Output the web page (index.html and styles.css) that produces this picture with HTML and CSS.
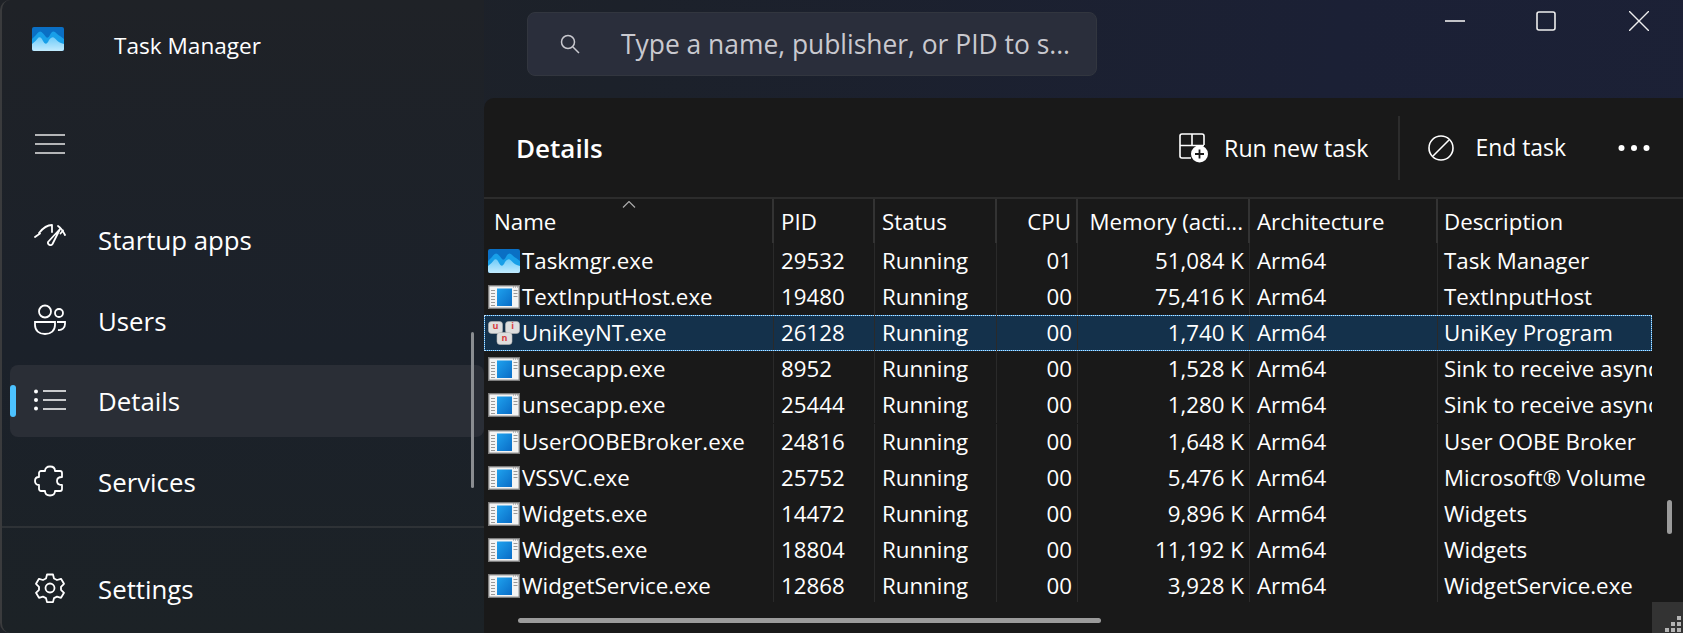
FILE: index.html
```html
<!DOCTYPE html>
<html lang="en">
<head>
<meta charset="utf-8">
<title>Task Manager</title>
<link rel="stylesheet" href="styles.css">
</head>
<body>
<svg class="defs" width="0" height="0" aria-hidden="true">
  <defs>
    <linearGradient id="blue" x1="0" y1="0" x2="1" y2="1"><stop offset="0" stop-color="#1fa2ee"/><stop offset="1" stop-color="#0a6cc6"/></linearGradient>
    <linearGradient id="light" x1="0" y1="0" x2="0" y2="1"><stop offset="0" stop-color="#6fcbf8"/><stop offset="1" stop-color="#c2ebfe"/></linearGradient>
  </defs>
  <symbol id="exe" viewBox="0 0 32 24">
    <rect x="0.7" y="0.7" width="30.600" height="22.600" fill="#f4f4f4" stroke="#7d7d7d" stroke-width="1.400"/>
    <rect x="9" y="3.500" width="15" height="17.500" fill="url(#blue)"/>
    <path d="M3 5.500h4M3 8.500h4M3 11.500h4M3 14.500h4M3 17.500h4M3 20.500h4M25.500 5.500h4M25.500 8.500h4M25.500 11.500h4" stroke="#999" stroke-width="1.200"/>
    <path d="M25 2h5" stroke="#8a8a8a" stroke-width="1.200" stroke-dasharray="1 1"/>
  </symbol>
  <symbol id="tm" viewBox="0 0 32 24">
    <rect width="32" height="24" rx="2" fill="#0a6fc4"/>
    <path d="M0 12 4 8Q7 3 9.500 5 12 7 14 10 16 12 18 8 20 3 23 5 26 8 28 9L32 12V22H0z" fill="#189fe8"/>
    <path d="M0 17Q4 14 6.500 10.500 9 9 11 14 14 20 17 13 20 8.500 23 11.500 27 16 32 17V22a2 2 0 0 1-2 2H2a2 2 0 0 1-2-2z" fill="url(#light)"/>
  </symbol>
</svg>
<div class="app">
  <aside class="side">
    <div class="brand">
      <svg class="brand-icon" viewBox="0 0 32 24"><use href="#tm"/></svg>
      <span class="brand-name">Task Manager</span>
    </div>
    <div class="burger"><svg viewBox="0 0 30 20" width="30" height="20"><path d="M0 1h30M0 10h30M0 19h30" stroke="#e6e6e6" stroke-width="1.600"/></svg></div>
    <nav class="nav">
      <a class="item"><svg class="ico" viewBox="0 0 32 32" fill="none" stroke="#fff" stroke-width="1.800" stroke-linecap="round" stroke-linejoin="round"><path d="M1 14 6 10.500M5 10C9 5 13 2 18 2V9M24 3c3 2 5 5 7 9M26.500 10.500 29 7.500"/><path d="M26 6 18.500 21a2.500 2.500 0 0 1-4.500-2Z"/></svg><span>Startup apps</span></a>
      <a class="item"><svg class="ico" viewBox="0 0 32 32" fill="none" stroke="#fff" stroke-width="1.800"><circle cx="11" cy="7.500" r="6"/><circle cx="25" cy="9" r="4"/><path d="M1 18h20v3c0 5.500-4 9-10 9S1 26.500 1 21zM23 18h8v2c0 4-3 6.500-7 6"/></svg><span>Users</span></a>
      <a class="item active"><i class="pip"></i><svg class="ico" viewBox="0 0 32 20" fill="none" stroke="#fff" stroke-width="1.700"><path d="M9 1h23M9 10h23M9 19h23"/><g fill="#fff" stroke="none"><circle cx="2" cy="1.500" r="2"/><circle cx="2" cy="10" r="2"/><circle cx="2" cy="18.500" r="2"/></g></svg><span>Details</span></a>
      <a class="item"><svg class="ico" viewBox="0 0 32 32" fill="none" stroke="#fff" stroke-width="1.800" stroke-linejoin="round"><path d="M11 6c0-3 2-4.500 5-4.500S21 3 21 6h5a2 2 0 0 1 2 2v4c-4 0-5 2-5 4s1 4 5 4v4a2 2 0 0 1-2 2h-5c0 3-2 4.500-5 4.500S11 29 11 26H7a2 2 0 0 1-2-2v-4c-3 0-4-2-4-4s1-4 4-4V8a2 2 0 0 1 2-2z"/></svg><span>Services</span></a>
    </nav>
    <div class="sep"></div>
    <a class="item settings"><svg class="ico" viewBox="0 0 32 32" fill="none" stroke="#fff" stroke-width="1.800" stroke-linejoin="round"><circle cx="16" cy="16" r="4.500"/><path d="M13 2.500h6l1 4 3 1.500 4-1.200 3 5-3 3v3l3 3-3 5-4-1.200-3 1.500-1 4h-6l-1-4-3-1.500-4 1.200-3-5 3-3v-3l-3-3 3-5 4 1.200 3-1.500z"/></svg><span>Settings</span></a>
    <i class="side-thumb"></i>
  </aside>
  <main class="right">
    <header class="top">
      <div class="search">
        <svg viewBox="0 0 22 22" width="22" height="22" fill="none" stroke="#c9c9cf" stroke-width="1.500"><circle cx="9" cy="9" r="6.500"/><path d="m14 14 6 6"/></svg>
        <span>Type a name, publisher, or PID to s...</span>
      </div>
      <div class="win">
        <svg viewBox="0 0 20 20" width="20" height="20"><path d="M0 10h20" stroke="#eee" stroke-width="1.600"/></svg>
        <svg viewBox="0 0 20 20" width="20" height="20"><rect x="1" y="1" width="18" height="18" rx="2" fill="none" stroke="#eee" stroke-width="1.600"/></svg>
        <svg class="close" viewBox="0 0 20 20" width="20" height="20"><path d="m0 0 20 20M20 0 0 20" stroke="#eee" stroke-width="1.400"/></svg>
      </div>
    </header>
    <section class="panel">
      <div class="bar">
        <h1>Details</h1>
        <a class="act"><svg viewBox="0 0 30 30" width="30" height="30" fill="none" stroke="#fff" stroke-width="1.600"><path d="M12 25H3a2 2 0 0 1-2-2V3a2 2 0 0 1 2-2h20a2 2 0 0 1 2 2v9M1 12.500h24M13 1v11.500"/><circle cx="20.500" cy="21" r="8.500" fill="#fff" stroke="none"/><path d="M20.500 16.500v9M16 21h9" stroke="#191919" stroke-width="1.800"/></svg><span>Run new task</span></a>
        <i class="bar-sep"></i>
        <a class="act end"><svg viewBox="0 0 26 26" width="26" height="26" fill="none" stroke="#fff" stroke-width="1.600"><circle cx="13" cy="13" r="12"/><path d="M5 21 21 5"/></svg><span>End task</span></a>
        <svg class="more" viewBox="0 0 32 8" width="32" height="8" fill="#fff"><circle cx="3.500" cy="4" r="3"/><circle cx="16" cy="4" r="3"/><circle cx="28.500" cy="4" r="3"/></svg>
      </div>
      <div class="table">
        <div class="row head">
          <span class="c name">Name<svg class="sort" viewBox="0 0 14 7" width="14" height="7" fill="none" stroke="#aaa" stroke-width="1.200"><path d="m1 6.500 6-6 6 6"/></svg></span>
          <span class="c">PID</span><span class="c">Status</span><span class="c r">CPU</span><span class="c r">Memory (acti...</span><span class="c">Architecture</span><span class="c">Description</span>
        </div>
        <div class="row"><span class="c name"><svg class="pi" viewBox="0 0 32 24"><use href="#tm"/></svg>Taskmgr.exe</span><span class="c">29532</span><span class="c">Running</span><span class="c r">01</span><span class="c r">51,084 K</span><span class="c">Arm64</span><span class="c">Task Manager</span></div>
        <div class="row"><span class="c name"><svg class="pi" viewBox="0 0 32 24"><use href="#exe"/></svg>TextInputHost.exe</span><span class="c">19480</span><span class="c">Running</span><span class="c r">00</span><span class="c r">75,416 K</span><span class="c">Arm64</span><span class="c">TextInputHost</span></div>
        <div class="row sel"><span class="c name"><svg class="pi" viewBox="0 0 32 24"><g fill="#dedede" stroke="#b5b5b5" stroke-width=".6"><rect x="0.500" y="0.500" width="14" height="12" rx="3"/><rect x="17.500" y="0.500" width="14" height="12" rx="3"/><rect x="9" y="11.500" width="15" height="12" rx="3"/></g><g class="keycap"><text x="7.500" y="8">u</text><text x="24.500" y="8">i</text><text x="16.500" y="19.500">n</text></g></svg>UniKeyNT.exe</span><span class="c">26128</span><span class="c">Running</span><span class="c r">00</span><span class="c r">1,740 K</span><span class="c">Arm64</span><span class="c">UniKey Program</span></div>
        <div class="row"><span class="c name"><svg class="pi" viewBox="0 0 32 24"><use href="#exe"/></svg>unsecapp.exe</span><span class="c">8952</span><span class="c">Running</span><span class="c r">00</span><span class="c r">1,528 K</span><span class="c">Arm64</span><span class="c">Sink to receive asynchronous</span></div>
        <div class="row"><span class="c name"><svg class="pi" viewBox="0 0 32 24"><use href="#exe"/></svg>unsecapp.exe</span><span class="c">25444</span><span class="c">Running</span><span class="c r">00</span><span class="c r">1,280 K</span><span class="c">Arm64</span><span class="c">Sink to receive asynchronous</span></div>
        <div class="row"><span class="c name"><svg class="pi" viewBox="0 0 32 24"><use href="#exe"/></svg>UserOOBEBroker.exe</span><span class="c">24816</span><span class="c">Running</span><span class="c r">00</span><span class="c r">1,648 K</span><span class="c">Arm64</span><span class="c">User OOBE Broker</span></div>
        <div class="row"><span class="c name"><svg class="pi" viewBox="0 0 32 24"><use href="#exe"/></svg>VSSVC.exe</span><span class="c">25752</span><span class="c">Running</span><span class="c r">00</span><span class="c r">5,476 K</span><span class="c">Arm64</span><span class="c">Microsoft® Volume Shadow</span></div>
        <div class="row"><span class="c name"><svg class="pi" viewBox="0 0 32 24"><use href="#exe"/></svg>Widgets.exe</span><span class="c">14472</span><span class="c">Running</span><span class="c r">00</span><span class="c r">9,896 K</span><span class="c">Arm64</span><span class="c">Widgets</span></div>
        <div class="row"><span class="c name"><svg class="pi" viewBox="0 0 32 24"><use href="#exe"/></svg>Widgets.exe</span><span class="c">18804</span><span class="c">Running</span><span class="c r">00</span><span class="c r">11,192 K</span><span class="c">Arm64</span><span class="c">Widgets</span></div>
        <div class="row"><span class="c name"><svg class="pi" viewBox="0 0 32 24"><use href="#exe"/></svg>WidgetService.exe</span><span class="c">12868</span><span class="c">Running</span><span class="c r">00</span><span class="c r">3,928 K</span><span class="c">Arm64</span><span class="c">WidgetService.exe</span></div>
        <i class="vthumb"></i>
      </div>
      <div class="hbar"><i class="hthumb"></i>
        <svg class="grip" viewBox="0 0 31 31" width="31" height="31" fill="#b4b4b4"><rect width="31" height="31" fill="#333"/><rect x="25" y="14" width="4" height="4"/><rect x="19" y="20" width="4" height="4"/><rect x="25" y="20" width="4" height="4"/><rect x="13" y="26" width="4" height="4"/><rect x="19" y="26" width="4" height="4"/><rect x="25" y="26" width="4" height="4"/></svg>
      </div>
    </section>
  </main>
</div>
</body>
</html>
```
FILE: styles.css
```css
* { box-sizing: border-box; }
html, body { margin: 0; height: 100%; overflow: hidden; }
body {
  background: #191919;
  color: #fff;
  font-family: "Open Sans", "Noto Sans", sans-serif;
  font-size: 22.300px;
}
.defs { position: absolute; }
.app {
  width: 1683px;
  height: 633px;
  display: grid;
  grid-template-columns: 484px 1199px;
  background: linear-gradient(100deg, #1f2227 0%, #1c212a 35%, #1b2035 75%, #1c2136 100%);
  overflow: hidden;
}
.side {
  position: relative;
  display: flex;
  flex-direction: column;
  border-left: 2px solid #3a3b3d;
  border-radius: 10px 0 0 10px;
  background: linear-gradient(180deg, #1f2227 0%, #1b212a 55%, #1c2226 100%);
}
.brand { display: flex; align-items: flex-start; height: 134px; padding: 27px 0 0 30px; }
.brand-icon { width: 32px; height: 24px; }
.brand-name { font-size: 22.600px; margin: 3px 0 0 50px; line-height: 32px; }
.burger { height: 70px; padding-left: 33px; }
.burger svg { display: block; }
.nav { display: flex; flex-direction: column; gap: 8.500px; padding: 0 0 0 8px; height: 322px; }
.item {
  position: relative;
  display: flex;
  align-items: center;
  height: 72px;
  flex: none;
  font-size: 25.800px;
  border-radius: 8px;
}
.item .ico { width: 32px; height: 32px; margin: -2px 32px 0 24px; flex: none; }
.item.active { background: #2a2e36; }
.pip { position: absolute; left: 0; top: 20px; width: 6px; height: 32px; border-radius: 3px; background: #4cc2ff; }
.sep { height: 2px; background: #2e3236; flex: none; }
.settings { margin: 25px 0 0 8px; }
.side-thumb { position: absolute; left: 469px; top: 332px; width: 3px; height: 156px; border-radius: 2px; background: #8a8d91; }
.right { display: flex; flex-direction: column; min-width: 0; }
.top { display: flex; height: 98px; flex: none; align-items: flex-start; padding: 12px 34px 0 43px; }
.search {
  width: 570px;
  height: 64px;
  display: flex;
  align-items: center;
  gap: 40px;
  padding: 0 0 0 31px;
  background: #2a2e3b;
  border: 1px solid #32363f;
  border-radius: 8px;
  color: #c9c9cf;
  font-size: 26.400px;
  white-space: nowrap;
}
.win { margin-left: auto; display: flex; gap: 71px; margin-top: -1px; }
.close { margin-left: 2px; }
.panel { flex: 1; display: flex; flex-direction: column; background: #191919; border-radius: 10px 0 0 0; min-height: 0; }
.bar { height: 101px; display: flex; align-items: center; flex: none; border-bottom: 2px solid #2c2c2c; padding: 0 33px 0 32px; }
.bar h1 { margin: 0 auto 0 0; font-size: 26px; font-weight: 600; }
.act { display: flex; align-items: center; gap: 15px; font-size: 23.200px; }
.bar-sep { width: 2px; height: 64px; background: #2c2c2c; margin: 0 28px 0 30px; }
.act.end { gap: 21px; font-size: 22.900px; }
.more { margin-left: 52px; }
.table { position: relative; flex: none; height: 403px; overflow: hidden; }
.row {
  display: grid;
  width: 1168px;
  grid-template-columns: 290px 101px 122px 81px 172px 188px 214px;
  height: 36.200px;
  align-items: center;
  white-space: nowrap;
}
.c { display: block; padding: 0 5px 0 7px; overflow: hidden; line-height: 36px; min-width: 0; border-right: 1px solid #2a2a2a; }
.c:last-child { border-right: 0; padding-left: 6px; }
.c.r { text-align: right; }
.name { display: flex; align-items: center; padding-left: 4px; }
.pi { width: 32px; height: 24px; flex: none; margin-right: 2px; }
.keycap text { font-size: 9px; font-weight: 700; fill: #d8403f; text-anchor: middle; }
.head { height: 43.500px; position: relative; }
.head .c { position: relative; height: 43.500px; line-height: 46px; border-right: 2px solid #333; overflow: visible; }
.head .name { padding-left: 10px; display: block; }
.head .c:last-child { border-right: 0; }
.sort { position: absolute; left: 138px; top: 2px; }
.sel { background: #14314b; box-shadow: inset 0 0 0 1px #2f8ad0; outline: 1px dotted #bfe3ff; outline-offset: -1px; }
.vthumb { position: absolute; left: 1183px; top: 301px; width: 5px; height: 34px; border-radius: 3px; background: #9b9b9b; }
.hbar { position: relative; flex: 1; }
.hthumb { position: absolute; left: 34px; top: 16px; width: 583px; height: 5px; border-radius: 3px; background: #9b9b9b; }
.grip { position: absolute; right: 0; bottom: 0; }
```
